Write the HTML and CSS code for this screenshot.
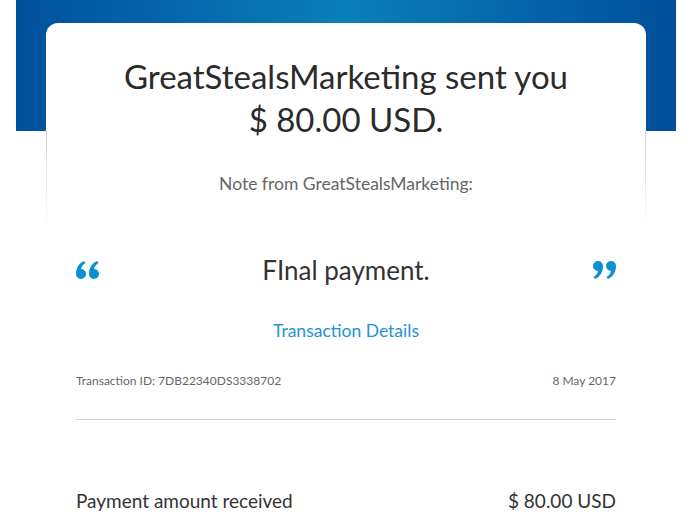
FILE: index.html
```html
<!DOCTYPE html>
<html lang="en">
<head>
    <meta charset="UTF-8">
    <meta name="viewport" content="width=device-width, initial-scale=1.0">
    <title>You received a payment</title>
    <link rel="stylesheet" href="styles.css">
</head>
<body>
    <div class="wrapper">
        <div class="banner"></div>
        <div class="card">
            <div class="card-head">
                <h1>GreatStealsMarketing sent you<br>$ 80.00 USD.</h1>
                <p class="note-label">Note from GreatStealsMarketing:</p>
            </div>
            <div class="card-body">
                <div class="quote">
                    <svg class="quote-mark" width="24" height="18" viewBox="0 0 24 18">
                        <path d="M0 13C0 7 3 2 8 0L9.5 2C7 3.5 5.5 5.5 5 8A5 5 0 1 1 0 13Z"/>
                        <path d="M13 13C13 7 16 2 21 0L22.5 2C20 3.5 18.5 5.5 18 8A5 5 0 1 1 13 13Z"/>
                    </svg>
                    <span class="quote-text">FInal payment.</span>
                    <svg class="quote-mark close" width="24" height="18" viewBox="0 0 24 18">
                        <path d="M0 13C0 7 3 2 8 0L9.5 2C7 3.5 5.5 5.5 5 8A5 5 0 1 1 0 13Z"/>
                        <path d="M13 13C13 7 16 2 21 0L22.5 2C20 3.5 18.5 5.5 18 8A5 5 0 1 1 13 13Z"/>
                    </svg>
                </div>
                <a class="details-link" href="#">Transaction Details</a>
                <div class="meta">
                    <span>Transaction ID: 7DB22340DS3338702</span>
                    <span>8 May 2017</span>
                </div>
                <hr>
                <div class="amount-row">
                    <span>Payment amount received</span>
                    <span>$ 80.00 USD</span>
                </div>
            </div>
        </div>
    </div>
</body>
</html>
```
FILE: styles.css
```css
body {
    margin: 0;
    padding: 0;
    background-color: #fff;
    font-family: Lato, "Open Sans", sans-serif;
    color: #333;
    overflow: hidden;
}

.wrapper {
    position: relative;
    width: 660px;
    margin-left: 16px;
}

.banner {
    height: 131px;
    background: linear-gradient(90deg, #00519b 0%, #0a7fb9 50%, #004f99 100%);
}

.card {
    position: relative;
    width: 600px;
    margin: -108px auto 0;
}

.card-head {
    background:
        linear-gradient(#fff, #fff) padding-box,
        linear-gradient(#fff 0%, #fff 52%, #d2d2d2 52%, #fff 100%) border-box;
    border: 1px solid transparent;
    border-top: 0;
    border-bottom: 0;
    border-radius: 12px 12px 0 0;
    padding: 32px 0 0;
    height: 175px;
    text-align: center;
}

h1 {
    margin: 0;
    font-size: 33px;
    font-weight: normal;
    line-height: 43px;
    color: #2b2b2b;
}

.note-label {
    margin: 33px 0 0;
    font-size: 17.5px;
    line-height: 20px;
    color: #666;
}

.card-body {
    padding: 25px 30px 0;
}

.quote {
    display: flex;
    justify-content: space-between;
    align-items: center;
}

.quote-mark {
    fill: #0d8fd8;
}

.quote-mark.close {
    transform: rotate(180deg);
}

.quote-text {
    font-size: 26px;
    line-height: 30px;
    color: #333;
}

.details-link {
    display: block;
    margin-top: 36px;
    text-align: center;
    font-size: 17.5px;
    line-height: 20px;
    color: #1e92d4;
    text-decoration: none;
}

.meta {
    display: flex;
    justify-content: space-between;
    margin-top: 33px;
    font-size: 12px;
    line-height: 14px;
    color: #666;
}

hr {
    margin: 31px 0 0;
    border: 0;
    border-top: 1px solid #d2d2d2;
}

.amount-row {
    display: flex;
    justify-content: space-between;
    margin-top: 71px;
    font-size: 19px;
    line-height: 20px;
    color: #333;
}
```
